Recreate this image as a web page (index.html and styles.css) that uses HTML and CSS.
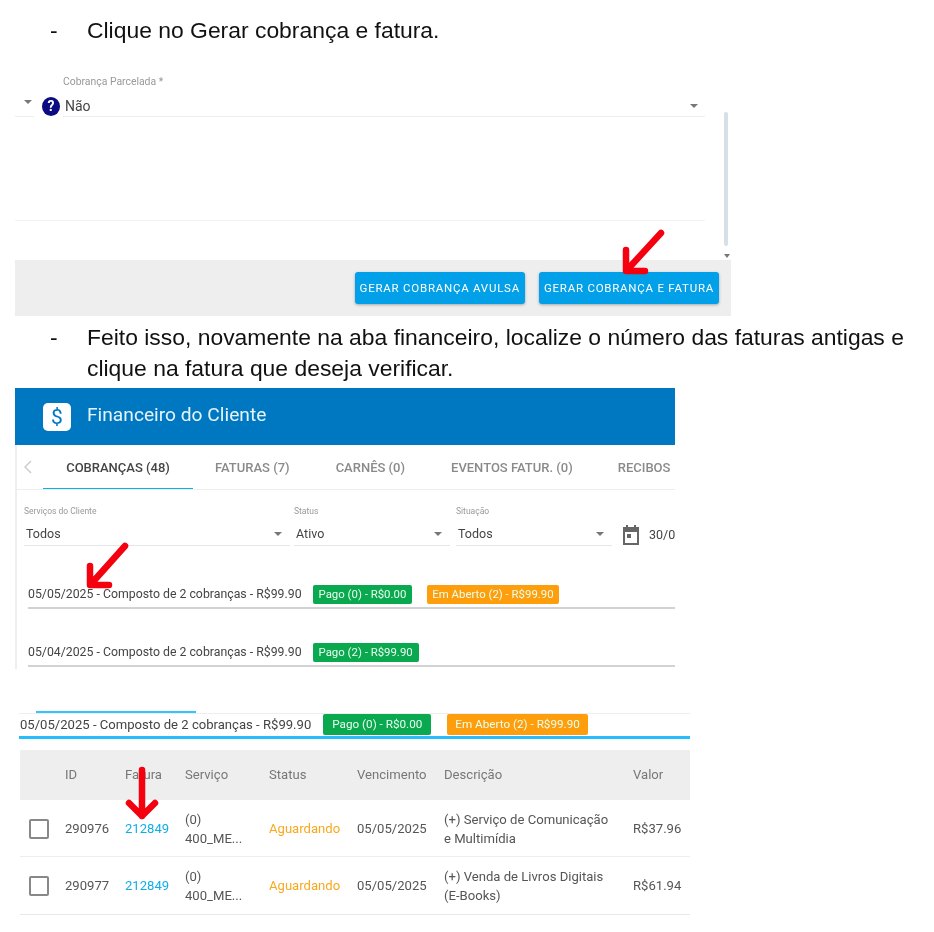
FILE: index.html
```html
<!DOCTYPE html>
<html lang="pt-BR">
<head>
    <meta charset="UTF-8">
    <meta name="viewport" content="width=device-width, initial-scale=1.0">
    <title>Gerar cobrança e fatura</title>
    <link rel="stylesheet" href="styles.css">
</head>
<body>

<div class="page">
    <div class="step step-first">
        <span class="step-dash">-</span>
        <p>Clique no Gerar cobrança e fatura.</p>
    </div>

    <!-- print 1: cobranca parcelada -->
    <div class="shot-charge">
        <div class="charge-form">
            <div class="charge-label">Cobrança Parcelada *</div>
            <div class="charge-row">
                <div class="mini-select"><span class="caret"></span></div>
                <span class="help-icon">?</span>
                <div class="select-line"><span>Não</span><span class="caret"></span></div>
            </div>
            <div class="charge-empty"></div>
        </div>
        <div class="charge-footer">
            <button class="action-btn">GERAR COBRANÇA AVULSA</button>
            <button class="action-btn">GERAR COBRANÇA E FATURA</button>
        </div>
        <div class="scroll-thumb"></div>
        <span class="caret scroll-caret"></span>
        <svg class="arrow arrow-one" width="50" height="50" viewBox="0 0 50 50">
            <path d="M44 5 L10 42 M9 22 L9 43 L28 43"></path>
        </svg>
    </div>

    <div class="step">
        <span class="step-dash">-</span>
        <p>Feito isso, novamente na aba financeiro, localize o número das faturas antigas e clique na fatura que deseja verificar.</p>
    </div>

    <!-- print 2: financeiro -->
    <div class="shot-finance">
        <div class="finance-header">
            <svg class="finance-icon" width="28" height="28" viewBox="0 0 28 28">
                <rect width="28" height="28" rx="5" fill="#fff"></rect>
                <text x="14" y="21" text-anchor="middle">$</text>
            </svg>
            <span class="finance-title">Financeiro do Cliente</span>
        </div>
        <div class="tabs">
            <svg class="tab-back" width="8" height="14" viewBox="0 0 8 14"><path d="M7 1 L1 7 L7 13"></path></svg>
            <div class="tab tab-active tab-charges">COBRANÇAS (48)</div>
            <div class="tab tab-invoices">FATURAS (7)</div>
            <div class="tab tab-books">CARNÊS (0)</div>
            <div class="tab tab-events">EVENTOS FATUR. (0)</div>
            <div class="tab tab-receipts">RECIBOS</div>
        </div>
        <div class="filters">
            <div class="filter filter-service">
                <label>Serviços do Cliente</label>
                <div class="filter-value"><span>Todos</span><span class="caret"></span></div>
            </div>
            <div class="filter filter-small">
                <label>Status</label>
                <div class="filter-value"><span>Ativo</span><span class="caret"></span></div>
            </div>
            <div class="filter filter-small">
                <label>Situação</label>
                <div class="filter-value"><span>Todos</span><span class="caret"></span></div>
            </div>
            <svg class="calendar-icon" width="18" height="20" viewBox="0 0 18 20">
                <path d="M4 0h2v2h6V0h2v2h3v18H1V2h3z M3 7v11h12V7z" fill="#666" fill-rule="evenodd"></path>
                <rect x="5" y="9" width="4" height="4" fill="#666"></rect>
            </svg>
            <div class="filter-date">30/05/2025</div>
        </div>
        <div class="group-row">
            <span class="group-text">05/05/2025 - Composto de 2 cobranças - R$99.90</span>
            <span class="badge badge-green">Pago (0) - R$0.00</span>
            <span class="badge badge-orange">Em Aberto (2) - R$99.90</span>
        </div>
        <div class="group-row group-row-last">
            <span class="group-text">05/04/2025 - Composto de 2 cobranças - R$99.90</span>
            <span class="badge badge-green">Pago (2) - R$99.90</span>
        </div>
        <svg class="arrow arrow-two" width="50" height="50" viewBox="0 0 50 50">
            <path d="M43 5 L9 43 M8 25 L8 44 L27 44"></path>
        </svg>
    </div>

    <!-- print 3: fatura aberta -->
    <div class="shot-invoice">
        <div class="invoice-tab-mark"></div>
        <div class="invoice-group">
            <span class="group-text">05/05/2025 - Composto de 2 cobranças - R$99.90</span>
            <span class="badge badge-green">Pago (0) - R$0.00</span>
            <span class="badge badge-orange">Em Aberto (2) - R$99.90</span>
        </div>
        <div class="invoice-table">
            <div class="table-row table-head">
                <div></div>
                <div>ID</div>
                <div>Fatura</div>
                <div>Serviço</div>
                <div>Status</div>
                <div>Vencimento</div>
                <div>Descrição</div>
                <div>Valor</div>
            </div>
            <div class="table-row">
                <div><span class="checkbox"></span></div>
                <div>290976</div>
                <div class="link">212849</div>
                <div>(0)<br>400_ME...</div>
                <div class="waiting">Aguardando</div>
                <div>05/05/2025</div>
                <div>(+) Serviço de Comunicação<br>e Multimídia</div>
                <div>R$37.96</div>
            </div>
            <div class="table-row">
                <div><span class="checkbox"></span></div>
                <div>290977</div>
                <div class="link">212849</div>
                <div>(0)<br>400_ME...</div>
                <div class="waiting">Aguardando</div>
                <div>05/05/2025</div>
                <div>(+) Venda de Livros Digitais<br>(E-Books)</div>
                <div>R$61.94</div>
            </div>
        </div>
        <svg class="arrow arrow-three" width="40" height="56" viewBox="0 0 40 56">
            <path d="M20 4 L20 50 M7 37 L20 50 L33 37"></path>
        </svg>
    </div>
</div>

</body>
</html>
```

FILE: styles.css
```css
* {
    box-sizing: border-box;
}

body {
    margin: 0;
    background-color: white;
    color: #333;
    font-family: Roboto, Arial, sans-serif;
}

.page {
    width: 934px;
    height: 932px;
    overflow: hidden;
    filter: blur(0.6px);
}

.step {
    display: flex;
    padding: 6px 28px 0 50px;
    font-family: "Liberation Sans", Arial, sans-serif;
    font-size: 22.9px;
    line-height: 31px;
    color: #111;
}

.step-first {
    padding-top: 15px;
}

.step-dash {
    width: 37px;
    flex-shrink: 0;
}

.step p {
    margin: 0;
}

.caret {
    display: inline-block;
    width: 0;
    height: 0;
    border-left: 4px solid transparent;
    border-right: 4px solid transparent;
    border-top: 4px solid #777;
}

.arrow {
    position: absolute;
}

.arrow path {
    fill: none;
    stroke: #f5000f;
    stroke-width: 6.5;
    stroke-linecap: round;
    stroke-linejoin: round;
}

/* print 1 */
.shot-charge {
    position: relative;
    width: 716px;
    height: 246px;
    margin: 24px 0 0 15px;
}

.charge-form {
    height: 190px;
    padding: 6px 26px 0 0;
}

.charge-label {
    margin-left: 48px;
    font-size: 10.4px;
    line-height: 12px;
    color: #999;
}

.charge-row {
    display: flex;
    align-items: stretch;
    height: 20px;
    margin-top: 9px;
}

.mini-select {
    width: 19px;
    border-bottom: 1px solid #eee;
    padding: 3px 0 0 9px;
}

.mini-select .caret {
    display: block;
}

.help-icon {
    width: 18px;
    height: 19px;
    margin: 0 3px 0 8px;
    border-radius: 50%;
    background-color: #0b0b82;
    color: white;
    font-size: 14px;
    font-weight: 700;
    line-height: 19px;
    text-align: center;
}

.select-line {
    flex: 1;
    display: flex;
    justify-content: space-between;
    align-items: center;
    padding: 0 7px 2px 2px;
    border-bottom: 1px solid #eee;
    font-size: 14px;
    color: #444;
}

.charge-empty {
    height: 104px;
    border-bottom: 1px solid #f2f2f2;
}

.charge-footer {
    display: flex;
    justify-content: flex-end;
    align-items: flex-start;
    gap: 14px;
    height: 56px;
    padding: 12px 12px 0 0;
    background-color: #eee;
}

.action-btn {
    height: 32px;
    padding: 0 5px;
    border: none;
    border-radius: 3px;
    background-color: #02a0e8;
    box-shadow: 0 1px 3px rgba(0, 0, 0, 0.3);
    color: white;
    font-family: Roboto, Arial, sans-serif;
    font-size: 11.5px;
    letter-spacing: 0.76px;
    white-space: nowrap;
}

.scroll-thumb {
    position: absolute;
    top: 42px;
    left: 709px;
    width: 4px;
    height: 134px;
    background-color: #d5e0e8;
    border-radius: 2px;
}

.scroll-caret {
    position: absolute;
    top: 184px;
    left: 709px;
    border-left-width: 3px;
    border-right-width: 3px;
}

.arrow-one {
    top: 158px;
    left: 602px;
}

/* print 2 */
.shot-finance {
    position: relative;
    width: 660px;
    height: 281px;
    margin: 4px 0 0 15px;
    box-shadow: inset 2px 0 0 #eee;
    overflow: hidden;
}

.finance-header {
    display: flex;
    align-items: center;
    gap: 16px;
    height: 57px;
    padding-left: 28px;
    background-color: #0078c1;
    color: #e6f3fb;
    font-size: 19.2px;
}

.finance-title {
    margin-bottom: 4px;
}

.finance-icon text {
    fill: #0078c1;
    font-family: Roboto, Arial, sans-serif;
    font-size: 21px;
}

.tabs {
    display: flex;
    align-items: center;
    height: 45px;
    border-bottom: 1px solid #eee;
    white-space: nowrap;
    overflow: hidden;
}

.tab-back {
    flex-shrink: 0;
    margin-left: 9px;
}

.tab-back path {
    fill: none;
    stroke: #ccc;
    stroke-width: 1.5;
}

.tab {
    flex-shrink: 0;
    height: 45px;
    font-size: 13px;
    font-weight: 500;
    line-height: 45px;
    color: #8a8a8a;
}

.tab-active {
    border-bottom: 2px solid #05b1e6;
    color: #444;
}

.tab-charges {
    width: 150px;
    margin-left: 11px;
    text-align: center;
}

.tab-invoices {
    margin-left: 22px;
}

.tab-books {
    margin-left: 46px;
}

.tab-events {
    margin-left: 46px;
}

.tab-receipts {
    margin-left: 45px;
}

.filters {
    display: flex;
    align-items: flex-start;
    gap: 4px;
    height: 94px;
    padding: 16px 0 0 9px;
    white-space: nowrap;
}

.filter {
    flex-shrink: 0;
}

.filter label {
    display: block;
    font-size: 8.5px;
    line-height: 11px;
    color: #999;
}

.filter-value {
    display: flex;
    justify-content: space-between;
    align-items: center;
    height: 26px;
    margin-top: 3px;
    padding: 2px 8px 0 2px;
    border-bottom: 1px solid #e6e6e6;
    font-size: 12.5px;
    color: #444;
}

.filter-service {
    width: 266px;
}

.filter-small {
    width: 156px;
}

.filter-small + .filter-small {
    margin-left: 2px;
}

.calendar-icon {
    flex-shrink: 0;
    margin: 19px 0 0 6px;
}

.filter-date {
    margin: 19px 0 0 5px;
    font-size: 12.5px;
    line-height: 20px;
    color: #444;
}

.group-row {
    display: flex;
    align-items: center;
    height: 25px;
    margin-left: 13px;
    padding-bottom: 3px;
    border-bottom: 2px solid #d2d2d2;
}

.group-row-last {
    margin-top: 33px;
}

.group-text {
    font-size: 12.3px;
    color: #444;
    white-space: nowrap;
}

.badge {
    height: 19px;
    margin-left: 11px;
    padding: 0 6px;
    border-radius: 2px;
    color: #eafff0;
    font-size: 11.4px;
    line-height: 19px;
    white-space: nowrap;
}

.badge-green {
    background-color: #0aa84f;
}

.badge-orange {
    margin-left: 15px;
    padding: 0 5px;
    background-color: #ff9e0c;
}

.arrow-two {
    top: 153px;
    left: 67px;
}

/* print 3 */
.shot-invoice {
    position: relative;
    width: 671px;
    height: 206px;
    margin: 42px 0 0 19px;
}

.invoice-tab-mark {
    width: 160px;
    height: 2px;
    margin-left: 17px;
    background-color: #35c3ff;
}

.invoice-group {
    display: flex;
    align-items: center;
    height: 26px;
    padding: 0 0 1px 1px;
    border-bottom: 3px solid #27bdfc;
    border-top: 1px solid #eee;
}

.invoice-group .group-text {
    font-size: 13.1px;
}

.invoice-group .badge {
    height: 21px;
    margin-left: 12px;
    padding: 0 8px;
    font-size: 11.7px;
    line-height: 21px;
}

.invoice-group .badge-green {
    padding: 0 9px;
}

.invoice-group .badge-orange {
    margin-left: 16px;
}

.invoice-table {
    margin: 11px 0 0 1px;
    border-bottom: 1px solid #e8e8e8;
}

.table-row {
    display: grid;
    grid-template-columns: 45px 60px 60px 84px 88px 87px 189px 57px;
    align-items: center;
    height: 57px;
    padding-top: 1px;
    border-bottom: 1px solid #eee;
    font-size: 13.1px;
    line-height: 19px;
    color: #555;
    white-space: nowrap;
}

.table-row:last-child {
    padding-top: 0;
    border-bottom: none;
}

.table-head {
    height: 50px;
    padding: 0 0 2px;
    border-bottom: none;
    background-color: #eee;
    color: #777;
}

.checkbox {
    display: block;
    width: 20px;
    height: 20px;
    margin-left: 9px;
    border: 2px solid #888;
    border-radius: 2px;
}

.link {
    color: #11aee6;
}

.waiting {
    color: #f8a81c;
}

.arrow-three {
    top: 55px;
    left: 103px;
}
```
